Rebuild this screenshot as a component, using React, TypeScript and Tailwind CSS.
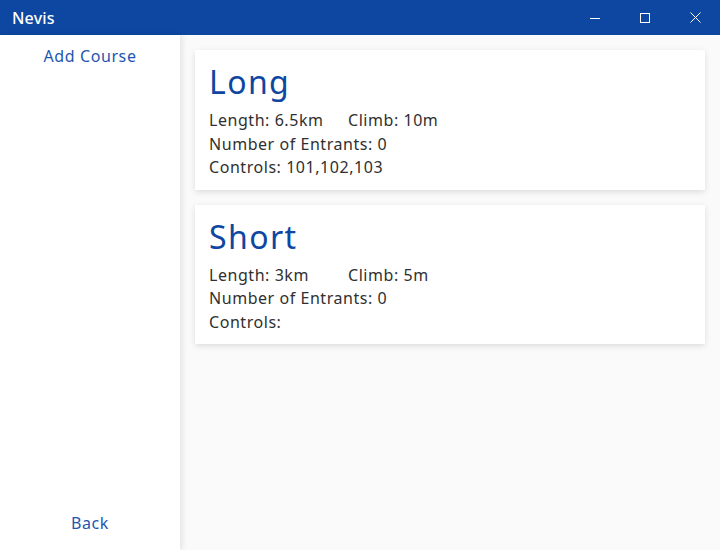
import React from "react";

const courses = [
  { name: "Long", length: "6.5km", climb: "10m", entrants: 0, controls: "101,102,103" },
  { name: "Short", length: "3km", climb: "5m", entrants: 0, controls: "" },
];

function TitleBar() {
  return (
    <div className="flex h-[35px] items-center bg-[#0d47a1] text-white">
      <div className="pl-3 text-[16px] font-medium tracking-[0.2px]">Nevis</div>
      <div className="ml-auto flex h-full">
        <div className="flex w-[50px] items-center justify-center">
          <svg width="10" height="10" viewBox="0 0 10 10">
            <path d="M0 5.5h10" stroke="white" strokeWidth="1" />
          </svg>
        </div>
        <div className="flex w-[50px] items-center justify-center">
          <svg width="10" height="10" viewBox="0 0 10 10">
            <rect x="0.5" y="0.5" width="9" height="9" fill="none" stroke="white" strokeWidth="1" />
          </svg>
        </div>
        <div className="flex w-[50px] items-center justify-center">
          <svg width="11" height="11" viewBox="0 0 11 11">
            <path d="M0.5 0.5l10 10M10.5 0.5l-10 10" stroke="white" strokeWidth="1" />
          </svg>
        </div>
      </div>
    </div>
  );
}

function CourseCard({ course }: { course: (typeof courses)[number] }) {
  return (
    <div className="bg-white px-[14px] pt-[10px] pb-[10px] shadow-[0_2px_6px_rgba(0,0,0,0.12)]">
      <h2 className="mb-[5px] text-[32px] leading-[44px] tracking-[1.4px] text-[#0d47a1]">{course.name}</h2>
      <div className="text-[16px] leading-[23.5px] tracking-[0.55px] text-[#303030]">
        <div className="flex">
          <span className="w-[139px]">Length: {course.length}</span>
          <span>Climb: {course.climb}</span>
        </div>
        <div>Number of Entrants: {course.entrants}</div>
        <div>Controls: {course.controls}</div>
      </div>
    </div>
  );
}

export default function App() {
  return (
    <div
      className="flex h-[550px] w-[720px] flex-col overflow-hidden bg-[#fafafa]"
      style={{ fontFamily: '"Noto Sans", "Open Sans", sans-serif' }}
    >
      <TitleBar />
      <div className="flex min-h-0 flex-1">
        <div className="relative z-10 flex w-[180px] flex-col justify-between bg-white pt-[9px] pb-[15px] text-center text-[16px] tracking-[0.6px] text-[#1e56b0] shadow-[2px_0_6px_rgba(0,0,0,0.1)]">
          <div>Add Course</div>
          <div>Back</div>
        </div>
        <div className="flex flex-1 flex-col gap-[15px] p-[15px]">
          {courses.map((c) => (
            <CourseCard key={c.name} course={c} />
          ))}
        </div>
      </div>
    </div>
  );
}
